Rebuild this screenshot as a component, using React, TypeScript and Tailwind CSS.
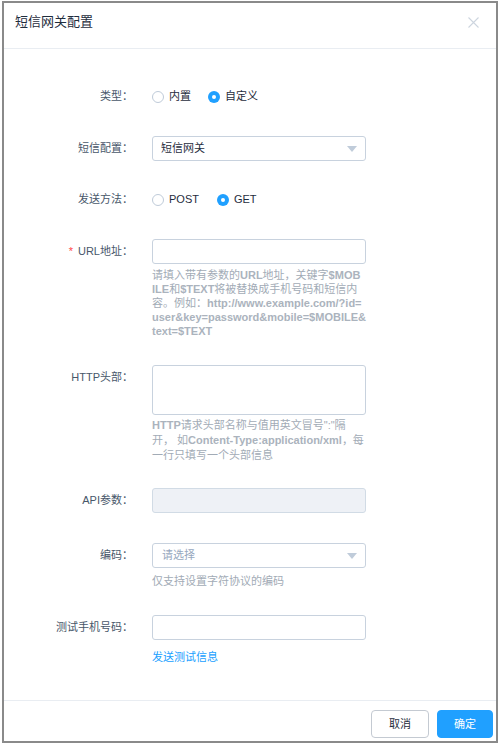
import React from "react";

const FONT = { fontFamily: '"Liberation Sans", "Noto Sans CJK SC", sans-serif' };

function Radio({ checked, label }: { checked?: boolean; label: string }) {
  return (
    <div className="flex items-center gap-[5px]">
      {checked ? (
        <span className="flex h-[12px] w-[12px] items-center justify-center rounded-full bg-[#20a0ff]">
          <span className="h-[4px] w-[4px] rounded-full bg-white" />
        </span>
      ) : (
        <span className="h-[12px] w-[12px] rounded-full border border-[#bfcbd9] bg-white" />
      )}
      <span className="text-[11px] text-[#1f2d3d]">{label}</span>
    </div>
  );
}

function Row({
  label,
  required,
  className,
  children,
}: {
  label: string;
  required?: boolean;
  className: string;
  children: React.ReactNode;
}) {
  return (
    <div className={"flex " + className}>
      <div className="flex h-[25px] w-[148px] shrink-0 items-center justify-end pr-[19px] text-[11px] text-[#48576a]">
        {required && <span className="mr-[5px] text-[#ff4949]">*</span>}
        <span>{label}</span>
      </div>
      <div className="w-[214px]">{children}</div>
    </div>
  );
}

function Arrow() {
  return (
    <svg width="10" height="6" viewBox="0 0 10 6" className="mr-[8px]">
      <path d="M0 0 L10 0 L5 6 Z" fill="#c0ccda" />
    </svg>
  );
}

const B = ({ children }: { children: React.ReactNode }) => (
  <span className="font-bold text-[#abb3bd]">{children}</span>
);

export default function App() {
  return (
    <div className="h-[744px] w-[500px] bg-white pb-[1px] pl-[2px] pr-[2px] pt-[1px]" style={FONT}>
      <div className="flex h-full flex-col border-2 border-[#8a8a8a] bg-white">
        {/* header */}
        <div className="flex h-[46px] shrink-0 items-start justify-between border-b border-[#e9edf2] pl-[11px] pr-[17px] pt-[9px]">
          <span className="text-[13px] leading-[20px] text-[#1f2d3d]">短信网关配置</span>
          <svg width="11" height="11" viewBox="0 0 11 11" className="mt-[5px]">
            <path d="M0.5 0.5 L10.5 10.5 M10.5 0.5 L0.5 10.5" stroke="#cdd5df" strokeWidth="1.1" />
          </svg>
        </div>

        {/* body */}
        <div className="flex flex-1 flex-col">
          <Row label="类型：" className="mt-[35px]">
            <div className="flex h-[25px] items-center">
              <Radio label="内置" />
              <div className="ml-[17px]">
                <Radio checked label="自定义" />
              </div>
            </div>
          </Row>

          <Row label="短信配置：" className="mt-[27px]">
            <div className="flex h-[25px] items-center justify-between rounded-[3px] border border-[#c8d2de] bg-white pl-[8px] text-[11px] text-[#1f2d3d]">
              <span>短信网关</span>
              <Arrow />
            </div>
          </Row>

          <Row label="发送方法：" className="mt-[26px]">
            <div className="flex h-[25px] items-center">
              <Radio label="POST" />
              <div className="ml-[18px]">
                <Radio checked label="GET" />
              </div>
            </div>
          </Row>

          <Row label="URL地址：" required className="mt-[27px]">
            <div className="h-[25px] rounded-[3px] border border-[#c8d2de] bg-white" />
            <div className="mt-[4px] whitespace-nowrap text-[11px] leading-[14px] text-[#a2abb6]">
              <div>
                请填入带有参数的<B>URL</B>地址，关键字<B>$MOB</B>
              </div>
              <div>
                <B>ILE</B>和<B>$TEXT</B>将被替换成手机号码和短信内
              </div>
              <div>
                容。例如：<B>http://www.example.com/?id=</B>
              </div>
              <div>
                <B>user&amp;key=password&amp;mobile=$MOBILE&amp;</B>
              </div>
              <div>
                <B>text=$TEXT</B>
              </div>
            </div>
          </Row>

          <Row label="HTTP头部：" className="mt-[27px]">
            <div className="h-[50px] rounded-[3px] border border-[#c8d2de] bg-white" />
            <div className="mt-[3px] whitespace-nowrap text-[11px] leading-[15px] text-[#a2abb6]">
              <div>
                <B>HTTP</B>请求头部名称与值用英文冒号":"隔
              </div>
              <div>
                开， 如<B>Content-Type:application/xml</B>，每
              </div>
              <div>一行只填写一个头部信息</div>
            </div>
          </Row>

          <Row label="API参数：" className="mt-[25px]">
            <div className="h-[25px] rounded-[3px] border border-[#d1dbe5] bg-[#eef1f6]" />
          </Row>

          <Row label="编码：" className="mt-[30px]">
            <div className="flex h-[25px] items-center justify-between rounded-[3px] border border-[#c8d2de] bg-white pl-[9px] text-[11px] text-[#97a8be]">
              <span>请选择</span>
              <Arrow />
            </div>
            <div className="mt-[6px] text-[11px] leading-[14px] text-[#a2abb6]">仅支持设置字符协议的编码</div>
          </Row>

          <Row label="测试手机号码：" className="mt-[27px]">
            <div className="h-[25px] rounded-[3px] border border-[#c8d2de] bg-white" />
            <div className="mt-[10px] text-[11px] leading-[14px] text-[#20a0ff]">发送测试信息</div>
          </Row>
        </div>

        {/* footer */}
        <div className="flex shrink-0 justify-end gap-[8px] border-t border-[#e9edf2] pb-[3px] pr-[3px] pt-[9px]">
          <button className="flex h-[28px] w-[58px] items-center justify-center rounded-[4px] border border-[#c4cad2] bg-white text-[11px] text-[#1f2d3d]">
            取消
          </button>
          <button className="flex h-[28px] w-[56px] items-center justify-center rounded-[4px] border border-[#20a0ff] bg-[#20a0ff] text-[11px] text-white">
            确定
          </button>
        </div>
      </div>
    </div>
  );
}
